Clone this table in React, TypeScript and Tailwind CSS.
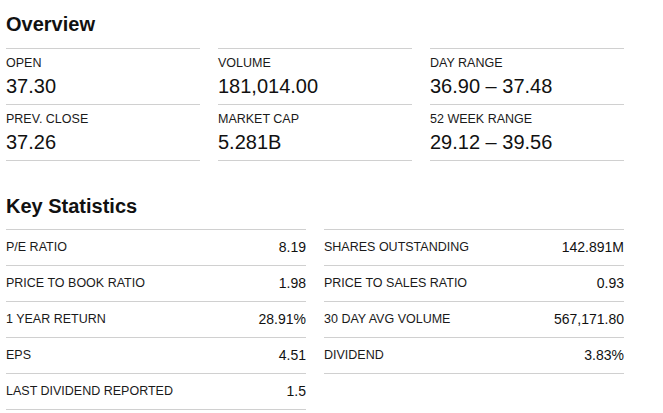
const overview = [
  ["OPEN", "37.30"],
  ["VOLUME", "181,014.00"],
  ["DAY RANGE", "36.90 – 37.48"],
  ["PREV. CLOSE", "37.26"],
  ["MARKET CAP", "5.281B"],
  ["52 WEEK RANGE", "29.12 – 39.56"],
];

const leftStats = [
  ["P/E RATIO", "8.19"],
  ["PRICE TO BOOK RATIO", "1.98"],
  ["1 YEAR RETURN", "28.91%"],
  ["EPS", "4.51"],
  ["LAST DIVIDEND REPORTED", "1.5"],
];

const rightStats = [
  ["SHARES OUTSTANDING", "142.891M"],
  ["PRICE TO SALES RATIO", "0.93"],
  ["30 DAY AVG VOLUME", "567,171.80"],
  ["DIVIDEND", "3.83%"],
];

function StatTable({ rows }: { rows: string[][] }) {
  return (
    <div className="border-b border-[#d0d0d0]">
      {rows.map(([label, value]) => (
        <div
          key={label}
          className="flex h-9 items-center justify-between border-t border-[#d0d0d0]"
        >
          <span className="text-[12.5px] text-[#1a1a1a]">{label}</span>
          <span className="text-[14px] text-[#111]">{value}</span>
        </div>
      ))}
    </div>
  );
}

export default function App() {
  return (
    <div className="min-h-screen bg-white font-['Liberation_Sans',Arial,sans-serif] text-[#111]">
      <div className="ml-[6px] w-[618px] pt-[10px]">
        {/* Overview */}
        <h2 className="mb-[10px] text-[20px] font-bold leading-7">Overview</h2>
        <div className="grid grid-cols-3 gap-x-[18px]">
          {overview.map(([label, value], i) => (
            <div
              key={label}
              className={`border-t border-[#d0d0d0] pt-[6px] pb-[4px] ${i >= 3 ? "border-b" : ""}`}
            >
              <div className="text-[12.5px] leading-4 text-[#1a1a1a]">{label}</div>
              <div className="mt-px text-[20px] leading-7">{value}</div>
            </div>
          ))}
        </div>

        {/* Key Statistics */}
        <h2 className="mt-[31px] mb-[9px] text-[20px] font-bold leading-7">Key Statistics</h2>
        <div className="grid grid-cols-2 items-start gap-x-[18px]">
          <StatTable rows={leftStats} />
          <StatTable rows={rightStats} />
        </div>
      </div>
    </div>
  );
}
